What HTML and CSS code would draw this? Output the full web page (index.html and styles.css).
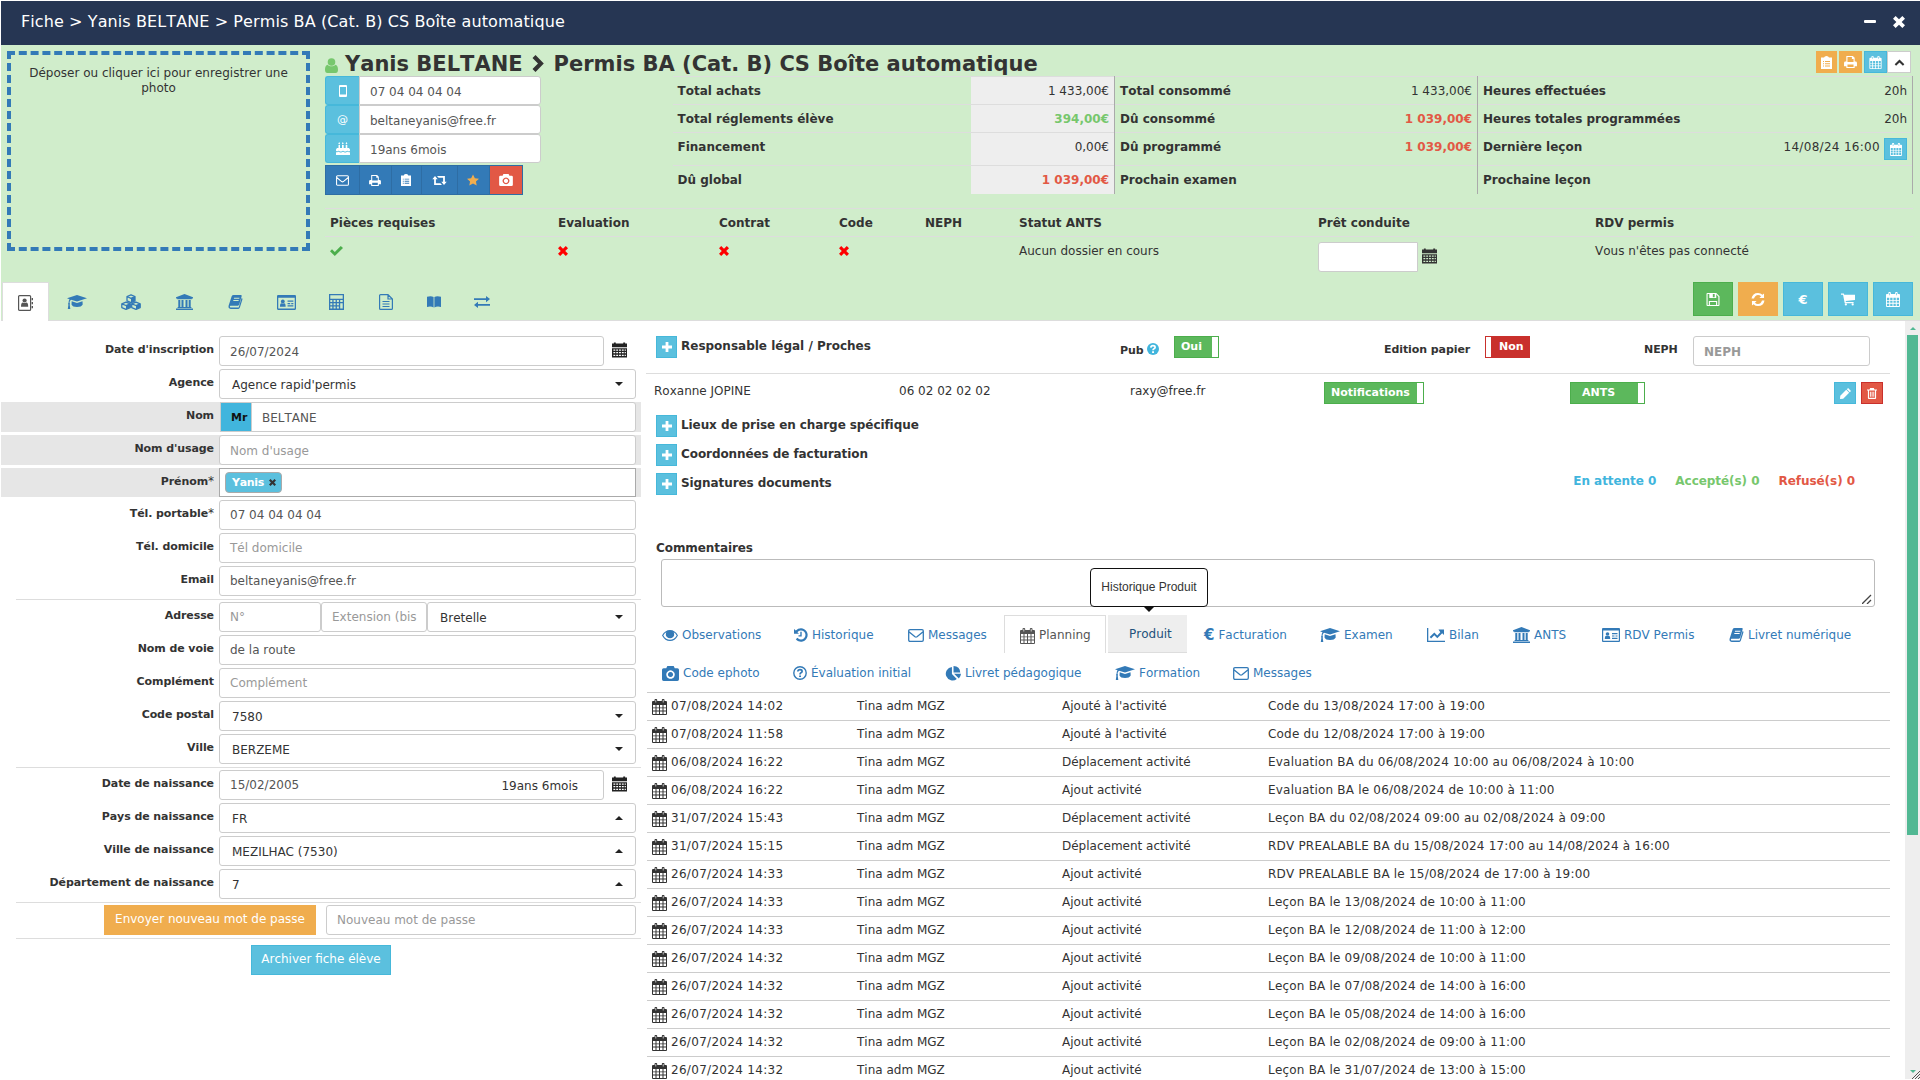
FILE: index.html
```html
<!DOCTYPE html>
<html lang="fr">
<head>
    <meta charset="UTF-8">
    <meta name="viewport" content="width=device-width, initial-scale=1.0">
    <title>Fiche - Yanis BELTANE</title>
    <link rel="stylesheet" href="styles.css">
</head>
<body>
    <!-- icon sprite -->
    <svg class="sprite" width="0" height="0">
        <symbol id="i-user" viewBox="0 0 13 15"><circle cx="6.5" cy="4" r="3.8"/><path d="M2.6 6.8C1 7.2 0 9 0 11.5 0 14 .8 15 2.5 15h8c1.700 0 2.500-1 2.500-3.500 0-2.500-1-4.300-2.600-4.700-2 2-5.800 2-7.800 0z"/></symbol>
        <symbol id="i-chev-right" viewBox="0 0 12 17"><path d="M.5 3L3.500 0l8.300 8.500L3.500 17l-3-3L6 8.500z"/></symbol>
        <symbol id="i-chev-up" viewBox="0 0 12 8"><path d="M6 .6l5.500 5.500-1.600 1.600L6 3.900 2.100 7.700.5 6.100z"/></symbol>
        <symbol id="i-phone" viewBox="0 0 8 12"><path fill-rule="evenodd" d="M1 0h6a1 1 0 0 1 1 1v10a1 1 0 0 1-1 1H1a1 1 0 0 1-1-1V1a1 1 0 0 1 1-1zM1 2v7.500h6V2z"/></symbol>
        <symbol id="i-cake" viewBox="0 0 14 13"><path d="M2.500 3h1.500v3h2V3h1.700v3h2V3h1.600v3h1.700l1 1.500v1.300c-1.200 1.200-2 .2-2.600 0-1 0-1.200.8-2.200.8s-1.200-.8-2.200-.8-1.200.8-2.200.8-1.200-.8-2.200-.8C2 8.800 1.600 10 0 8.800V7.500L1 6h1.500zM0 10.200c1.500.4 1.800-.4 2.600-.4s1.200.8 2.200.8 1.200-.8 2.200-.8 1.200.8 2.200.8 1.200-.8 2.200-.8 1.200.8 2.600.4V13H0zM3.200 0l.9 1.500-.9 1-.9-1zM6.800 0l.9 1.500-.9 1-.9-1zM10.500 0l.9 1.500-.9 1-.9-1z"/></symbol>
        <symbol id="i-mail" viewBox="0 0 16 13"><path fill="none" stroke="currentColor" stroke-width="1.300" d="M2 .7h12q1.300 0 1.300 1.300v9q0 1.300-1.300 1.300H2Q.7 12.300.7 11V2Q.7.700 2 .7zM.9 2.800L7 7.800q1 .7 2 0l6.100-5"/></symbol>
        <symbol id="i-print" viewBox="0 0 14 13"><path fill-rule="evenodd" d="M2.500 0h7L11.500 2v4h1Q14 6 14 7.500V11h-2.500v2h-9v-2H0V7.500Q0 6 1.500 6h1zM3.700 1.200V6.500h6.600V3.200H8.500v-2zM3.700 9.300v2.500h6.600V9.300z"/></symbol>
        <symbol id="i-clip" viewBox="0 0 11 13"><path fill-rule="evenodd" d="M0 1.500h3Q3.500 0 5.500 0t2.500 1.500h3V13H0zM2 5v1h1V5zm2 0v1h5V5zM2 7.300v1h1v-1zm2 0v1h5v-1zM2 9.600v1h1v-1zm2 0v1h5v-1z"/></symbol>
        <symbol id="i-retweet" viewBox="0 0 16 10"><path d="M3 0l3 3.500H4V8h5l1.800 2H2V3.500H0zM13 10l3-3.500h-2V0H5.200L7 2h5v4.500h-2z"/></symbol>
        <symbol id="i-star" viewBox="0 0 13 12"><path d="M6.500 0l2 4L13 4.600 9.700 7.700l.8 4.300-4-2.100-4 2.100.8-4.300L0 4.600 4.500 4z"/></symbol>
        <symbol id="i-camera" viewBox="0 0 16 14"><path fill-rule="evenodd" d="M1.500 2H4l1-2h6l1 2h2.500Q16 2 16 3.500v9q0 1.500-1.500 1.500h-13Q0 14 0 12.500v-9Q0 2 1.500 2zM8 4a4 4 0 1 0 .01 0zM8 5.600a2.400 2.400 0 1 1-.01 0z"/></symbol>
        <symbol id="i-check" viewBox="0 0 13 10"><path d="M0 5.200L2 3.200l2.800 2.700L10.800 0 13 2 4.800 10z"/></symbol>
        <symbol id="i-times" viewBox="0 0 10 10"><path d="M2.200 0L5 2.800 7.800 0 10 2.200 7.200 5 10 7.800 7.800 10 5 7.200 2.200 10 0 7.800 2.800 5 0 2.200z"/></symbol>
        <symbol id="i-calendar" viewBox="0 0 15 16"><path fill-rule="evenodd" d="M0 3q0-1 1-1h1.500V1q0-1 1-1h.7q1 0 1 1v1h4.600V1q0-1 1-1h.7q1 0 1 1v1H14q1 0 1 1v12q0 1-1 1H1q-1 0-1-1zM1 6v2.500h2.500V6zm3.500 0v2.500h2.500V6zM8 6v2.500h2.500V6zm3.500 0v2.500H14V6zM1 9.300v2.300h2.500V9.300zm3.500 0v2.300h2.500V9.300zM8 9.300v2.300h2.500V9.300zm3.500 0v2.300H14V9.300zM1 12.500V15h2.500v-2.500zm3.500 0V15h2.500v-2.500zM8 12.500V15h2.500v-2.500zm3.500 0V15H14v-2.500zM3.500 1v2.500h.7V1zm7.300 0v2.500h.7V1z"/></symbol>
        <symbol id="i-datepick" viewBox="0 0 16 16"><path fill-rule="evenodd" d="M0 1h2V0h2v1h8V0h2v1h2v4H0zM0 6h16v10H0zM1.500 7.500v1.300h2V7.500zm3 0v1.300h2V7.500zm3 0v1.300h2V7.500zm3 0v1.300h2V7.500zm3 0v1.300h1.300V7.500zM1.500 10.200v1.300h2v-1.300zm3 0v1.300h2v-1.300zm3 0v1.300h2v-1.300zm3 0v1.300h2v-1.300zm3 0v1.300h1.300v-1.300zM1.500 13v1.500h2V13zm3 0v1.500h2V13zm3 0v1.500h2V13zm3 0v1.500h2V13zm3 0v1.500h1.300V13z"/></symbol>
        <symbol id="i-contact" viewBox="0 0 15 16"><path fill="none" stroke="currentColor" stroke-width="1.200" d="M1.600.6h10q1 0 1 1v12.800q0 1-1 1h-10q-1 0-1-1V1.600q0-1 1-1z"/><circle cx="6.600" cy="5.500" r="2.100"/><path d="M3 11.800q0-4.200 2-4.200 1.600 1 3.200 0 2 0 2 4.200zM13.600 3H15v2.300h-1.400zm0 4H15v2.300h-1.400zm0 4H15v2.300h-1.400z"/></symbol>
        <symbol id="i-grad" viewBox="0 0 20 15"><path d="M10 0l10 3.300L10 6.600 4 4.700Q2.600 5.500 2.500 8q1 .8.200 1.700L3.300 14H.8l.6-4.300Q.6 8.800 1.500 8 1.600 5.500 2.500 4.200L0 3.300zM4.700 6.300L10 8l5.500-1.700.2 3.200Q14.500 12 10 12t-5.500-2.500z"/></symbol>
        <symbol id="i-cubes" viewBox="0 0 20 16"><path fill="none" stroke="currentColor" stroke-width="1.300" stroke-linejoin="round" d="M10 .8l4 1.700v4.300l-4 1.800-4-1.800V2.500zM6 2.500l4 1.800 4-1.800M5 8.200l4.300 1.600v3.800L5 15.300.8 13.600V9.800zM.8 9.800L5 11.500l4.300-1.700M15 8.200l4.200 1.600v3.800L15 15.300l-4.300-1.700V9.800zM10.700 9.800L15 11.500l4.200-1.700"/><path d="M10 4.300l4-1.800v4.300l-4 1.800zM5 11.500l4.300-1.700v3.800L5 15.300zM15 11.500l4.200-1.700v3.800L15 15.300z"/></symbol>
        <symbol id="i-bank" viewBox="0 0 17 16"><path d="M8.500 0L17 3.300v1.200h-1.200v.8H1.200v-.8H0V3.300zM2.300 6h2v7h1.200V6h2v7h2V6h2v7h1.200V6h2v7h.7v1H1.600v-1h.7zM0 14.600h17V16H0z"/></symbol>
        <symbol id="i-book" viewBox="0 0 15 15"><path fill-rule="evenodd" d="M5.500 0h7.700q1.300 0 .9 1.300l-2.600 9Q11.200 11.500 10 11.500H2.300q-1 .2-.8 1 .2.900 1.300.9h8.100L14 3.200q1.300.3.900 1.600l-2.700 8.700Q11.700 15 10.500 15H2.300Q-.5 14.500.1 11.600L3.400 1.300Q4 0 5.500 0zM6 3l-.3 1h5.800l.3-1zm-.7 2.400L5 6.400h5.700l.3-1z"/></symbol>
        <symbol id="i-card" viewBox="0 0 18 14"><path fill-rule="evenodd" d="M1 0h16q1 0 1 1v12q0 1-1 1H1q-1 0-1-1V1q0-1 1-1zM1.200 2.500v10.300h15.600V2.500z"/><circle cx="5.500" cy="6" r="1.800"/><path d="M2.800 11q0-3.300 1.500-3.300 1.200.7 2.400 0Q8.200 7.700 8.200 11zM10 5h5.500v1.200H10zm0 2.400h2.500v1.200H10zm3.500 0h2v1.200h-2zM10 9.700h5.500v1.200H10z"/></symbol>
        <symbol id="i-calc" viewBox="0 0 15 16"><path fill-rule="evenodd" d="M0 0h15v16H0zM1.300 1.300v3.500h12.400V1.300zM1.300 6v2h2V6zm3.300 0v2h2V6zm3.300 0v2h2V6zm3.300 0v2h2.500V6zM1.300 9.200v2h2v-2zm3.300 0v2h2v-2zm3.300 0v2h2v-2zM11.200 9.200v5.300h2.500V9.200zM1.300 12.500v2h2v-2zm3.300 0v2h2v-2zm3.300 0v2h2v-2z"/></symbol>
        <symbol id="i-file" viewBox="0 0 14 16"><path fill="none" stroke="currentColor" stroke-width="1.200" d="M9 .6H1.600q-1 0-1 1v12.800q0 1 1 1h10.800q1 0 1-1V5zM9 .6V5h4.400M3.500 7.500h7M3.500 10h7M3.500 12.500h7"/></symbol>
        <symbol id="i-open" viewBox="0 0 14 12"><path d="M0 .8Q4-.6 6.600 1v10.500Q4 10 0 11zM14 .8Q10-.6 7.400 1v10.500Q10 10 14 11z"/></symbol>
        <symbol id="i-swap" viewBox="0 0 16 12"><path d="M0 2.200h12V0l4 3.100-4 3.100V4H0zM16 8H4V5.800L0 8.900 4 12V9.800h12z"/></symbol>
        <symbol id="i-save" viewBox="0 0 14 14"><path fill-rule="evenodd" d="M1 0h9.500L14 3.500V13q0 1-1 1H1q-1 0-1-1V1q0-1 1-1zM1.200 1.200v11.600h1.300V8.500h9v4.300h1.300V4L10.500 1.400V5.500H3V1.200zM6.800 1.200v3.300h2V1.200zM3.700 9.700v3.100h6.600V9.700z"/></symbol>
        <symbol id="i-refresh" viewBox="0 0 14 14"><path d="M0 6Q1 0 7 0q2.800 0 4.800 2L13.500.5V5.500h-5L10.300 3.600Q9 2.200 7 2.200 4 2.200 2.700 6zM14 8q-1 6-7 6-2.800 0-4.800-2L.5 13.500V8.500h5L3.700 10.400Q5 11.800 7 11.800q3 0 4.300-3.800z"/></symbol>
        <symbol id="i-cart" viewBox="0 0 15 13"><path d="M0 0h3l.5 1.500H15V7L5 8.200l.2 1H13.500v1.300H4L2.200 1.300H0z"/><circle cx="5.200" cy="11.800" r="1.200"/><circle cx="12.500" cy="11.800" r="1.200"/></symbol>
        <symbol id="i-plus" viewBox="0 0 10 10"><path d="M3.600 0h2.800v3.600H10v2.800H6.400V10H3.600V6.400H0V3.600h3.600z"/></symbol>
        <symbol id="i-pencil" viewBox="0 0 12 12"><path d="M8.800 0L12 3.200 10.700 4.500 7.500 1.300zM6.800 2L10 5.200 3.500 11.700 0 12l.3-3.500z"/></symbol>
        <symbol id="i-trash" viewBox="0 0 11 12"><path fill-rule="evenodd" d="M3.500 0h4l.7 1.500H11v1.200h-1V11q0 1-1 1H2q-1 0-1-1V2.700H0V1.500h2.800zM2.200 2.700v8h6.600v-8zM3.200 4h1v5.500h-1zm1.900 0h1v5.500h-1zM7 4h1v5.500H7z"/></symbol>
        <symbol id="i-eye" viewBox="0 0 16 11"><path fill-rule="evenodd" d="M8 0q5 0 8 5.500Q13 11 8 11T0 5.500Q3 0 8 0zM4.300 2.200Q2.500 3.300 1.300 5.500 4 9.800 8 9.800t6.700-4.300q-1.200-2.200-3-3.300 1.300 3.300-.8 5.100-2.900 2-5.700 0Q3 5.500 4.300 2.200z"/><path d="M8 1.500a3.200 3.200 0 1 0 .01 0z"/></symbol>
        <symbol id="i-history" viewBox="0 0 14 14"><path d="M0 1l1.800 1.600Q4 .3 7 .3a6.700 6.700 0 1 1-5.200 11l1.700-1.500A4.500 4.500 0 1 0 3.400 4.200L5 5.800H0zM6.300 3.800h1.400v4.700H4.500V7.200h1.800z"/></symbol>
        <symbol id="i-chart" viewBox="0 0 18 14"><path d="M0 0h1.300v12.700H18V14H0zM11.500 1.500H17V7l-1.800-1.700-4.900 5-3-3-3.200 3.200-1.400-1.400 4.600-4.600 3 3 3-3.200z"/></symbol>
        <symbol id="i-question" viewBox="0 0 14 14"><circle cx="7" cy="7" r="6.200" fill="none" stroke="currentColor" stroke-width="1.400"/><path fill="none" stroke="currentColor" stroke-width="1.700" d="M4.800 5.500Q5 3.700 7 3.700t2.100 1.600Q9 6.300 8 6.800t-1 1.700"/><path d="M6.100 9.400H8v1.700H6.100z"/></symbol>
        <symbol id="i-help" viewBox="0 0 12 12"><circle cx="6" cy="6" r="6"/><path fill="none" stroke="#fff" stroke-width="1.700" d="M3.800 4.700Q4 2.700 6 2.700t2.100 1.600Q8 5.400 7 5.800T6 7.300"/><path fill="#fff" d="M5.100 8.200H7v1.700H5.100z"/></symbol>
        <symbol id="i-pie" viewBox="0 0 15 14"><path d="M6.500 1v6.500l4.600 4.600A6.300 6.300 0 1 1 6.500 1zM8 0q6 .3 6.300 6H8zM8.500 7.300H15q-.2 2.700-2 4.300z"/></symbol>
    </svg>

    <div class="window">
        <div class="titlebar">
            <span class="title">Fiche &gt; Yanis BELTANE &gt; Permis BA (Cat. B) CS Boîte automatique</span>
            <div class="window-controls">
                <span class="minimize"></span>
                <svg width="12" height="12"><use href="#i-times"/></svg>
            </div>
        </div>

        <div class="student">
            <div class="student-top">
                <div class="photo-drop">Déposer ou cliquer ici pour enregistrer une photo</div>
                <div class="student-main">
                    <div class="student-heading">
                        <svg class="user-icon" width="13" height="15"><use href="#i-user"/></svg>
                        <h1>Yanis BELTANE</h1>
                        <svg class="sep" width="12" height="17"><use href="#i-chev-right"/></svg>
                        <h1>Permis BA (Cat. B) CS Boîte automatique</h1>
                        <div class="mini-buttons">
                            <button class="mini orange small"><svg width="11" height="13"><use href="#i-clip"/></svg></button>
                            <button class="mini orange"><svg width="13" height="12"><use href="#i-print"/></svg></button>
                            <button class="mini info"><svg width="13" height="13"><use href="#i-calendar"/></svg></button>
                            <button class="mini plain"><svg width="11" height="7"><use href="#i-chev-up"/></svg></button>
                        </div>
                    </div>

                    <div class="student-info">
                        <div class="contact">
                            <div class="contact-row"><span class="addon"><svg width="8" height="12"><use href="#i-phone"/></svg></span><span class="value">07 04 04 04 04</span></div>
                            <div class="contact-row"><span class="addon">@</span><span class="value">beltaneyanis@free.fr</span></div>
                            <div class="contact-row"><span class="addon"><svg width="14" height="13"><use href="#i-cake"/></svg></span><span class="value">19ans 6mois</span></div>
                            <div class="button-group">
                                <button><svg width="13" height="11"><use href="#i-mail"/></svg></button>
                                <button><svg width="12" height="11"><use href="#i-print"/></svg></button>
                                <button><svg width="10" height="12"><use href="#i-clip"/></svg></button>
                                <button><svg width="15" height="9"><use href="#i-retweet"/></svg></button>
                                <button class="star"><svg width="12" height="12"><use href="#i-star"/></svg></button>
                                <button class="danger"><svg width="14" height="12"><use href="#i-camera"/></svg></button>
                            </div>
                        </div>
                        <table class="totals">
                            <colgroup><col class="t1"><col class="t2"><col class="t3"><col class="t4"><col class="t5"><col class="t6"></colgroup>
                            <tr>
                                <th>Total achats</th><td class="grey">1 433,00€</td>
                                <th>Total consommé</th><td>1 433,00€</td>
                                <th>Heures effectuées</th><td>20h</td>
                            </tr>
                            <tr>
                                <th>Total réglements élève</th><td class="grey green">394,00€</td>
                                <th>Dû consommé</th><td class="red">1 039,00€</td>
                                <th>Heures totales programmées</th><td>20h</td>
                            </tr>
                            <tr class="tall">
                                <th>Financement</th><td class="grey">0,00€</td>
                                <th>Dû programmé</th><td class="red">1 039,00€</td>
                                <th>Dernière leçon</th>
                                <td><div class="lesson">14/08/24 16:00 <button class="mini info"><svg width="12" height="13"><use href="#i-calendar"/></svg></button></div></td>
                            </tr>
                            <tr>
                                <th>Dû global</th><td class="grey red">1 039,00€</td>
                                <th>Prochain examen</th><td></td>
                                <th>Prochaine leçon</th><td></td>
                            </tr>
                        </table>
                    </div>

                    <table class="status">
                        <colgroup><col class="s1"><col class="s2"><col class="s3"><col class="s4"><col class="s5"><col class="s6"><col class="s7"><col></colgroup>
                        <tr>
                            <th>Pièces requises</th><th>Evaluation</th><th>Contrat</th><th>Code</th><th>NEPH</th><th>Statut ANTS</th><th>Prêt conduite</th><th>RDV permis</th>
                        </tr>
                        <tr>
                            <td><svg class="ok" width="13" height="10"><use href="#i-check"/></svg></td>
                            <td><svg class="ko" width="10" height="10"><use href="#i-times"/></svg></td>
                            <td><svg class="ko" width="10" height="10"><use href="#i-times"/></svg></td>
                            <td><svg class="ko" width="10" height="10"><use href="#i-times"/></svg></td>
                            <td></td>
                            <td>Aucun dossier en cours</td>
                            <td><div class="ready"><span class="ready-input"></span><svg width="15" height="16"><use href="#i-datepick"/></svg></div></td>
                            <td>Vous n'êtes pas connecté</td>
                        </tr>
                    </table>
                </div>
            </div>

            <div class="student-bottom">
                <div class="main-tabs">
                    <a class="active"><svg width="15" height="16"><use href="#i-contact"/></svg></a>
                    <a><svg width="20" height="15"><use href="#i-grad"/></svg></a>
                    <a><svg width="20" height="16"><use href="#i-cubes"/></svg></a>
                    <a><svg width="17" height="16"><use href="#i-bank"/></svg></a>
                    <a><svg width="15" height="14"><use href="#i-book"/></svg></a>
                    <a><svg width="19" height="15"><use href="#i-card"/></svg></a>
                    <a><svg width="15" height="16"><use href="#i-calc"/></svg></a>
                    <a><svg width="14" height="16"><use href="#i-file"/></svg></a>
                    <a><svg width="14" height="12"><use href="#i-open"/></svg></a>
                    <a><svg width="16" height="12"><use href="#i-swap"/></svg></a>
                </div>
                <div class="actions">
                    <button class="success"><svg width="14" height="13"><use href="#i-save"/></svg></button>
                    <button class="orange"><svg width="14" height="13"><use href="#i-refresh"/></svg></button>
                    <button class="info">€</button>
                    <button class="info"><svg width="14" height="13"><use href="#i-cart"/></svg></button>
                    <button class="info"><svg width="14" height="15"><use href="#i-calendar"/></svg></button>
                </div>
            </div>
        </div>

        <div class="content">
            <div class="identity">
                <div class="field low"><label>Date d'inscription</label><span class="input date">26/07/2024</span><svg class="picker" width="15" height="16"><use href="#i-datepick"/></svg></div>
                <div class="field"><label>Agence</label><span class="input select">Agence rapid'permis</span></div>
                <div class="field shaded low"><label>Nom</label><span class="civility">Mr</span><span class="input named">BELTANE</span></div>
                <div class="field shaded low"><label>Nom d'usage</label><span class="input placeholder">Nom d'usage</span></div>
                <div class="field shaded short"><label>Prénom<i>*</i></label><span class="input tags"><span class="tag">Yanis <svg width="7" height="7"><use href="#i-times"/></svg></span></span></div>
                <div class="field"><label>Tél. portable<i>*</i></label><span class="input">07 04 04 04 04</span></div>
                <div class="field"><label>Tél. domicile</label><span class="input placeholder">Tél domicile</span></div>
                <div class="field"><label>Email</label><span class="input">beltaneyanis@free.fr</span></div>
                <hr>
                <div class="field"><label>Adresse</label><span class="input placeholder num">N°</span><span class="input placeholder ext">Extension (bis</span><span class="input select">Bretelle</span></div>
                <div class="field"><label>Nom de voie</label><span class="input">de la route</span></div>
                <div class="field"><label>Complément</label><span class="input placeholder">Complément</span></div>
                <div class="field"><label>Code postal</label><span class="input select">7580</span></div>
                <div class="field"><label>Ville</label><span class="input select">BERZEME</span></div>
                <hr>
                <div class="field"><label>Date de naissance</label><span class="input date">15/02/2005<span class="age">19ans 6mois</span></span><svg class="picker" width="15" height="16"><use href="#i-datepick"/></svg></div>
                <div class="field"><label>Pays de naissance</label><span class="input select up">FR</span></div>
                <div class="field"><label>Ville de naissance</label><span class="input select up">MEZILHAC (7530)</span></div>
                <div class="field"><label>Département de naissance</label><span class="input select up">7</span></div>
                <hr>
                <div class="field password"><button class="orange">Envoyer nouveau mot de passe</button><span class="input placeholder">Nouveau mot de passe</span></div>
                <hr>
                <button class="archive info">Archiver fiche élève</button>
            </div>

            <div class="details">
                <div class="legal">
                    <button class="plus info"><svg width="10" height="10"><use href="#i-plus"/></svg></button>
                    <h4>Responsable légal / Proches</h4>
                    <label class="pub">Pub <svg width="12" height="12"><use href="#i-help"/></svg></label>
                    <span class="toggle on pub-toggle">Oui</span>
                    <label class="paper">Edition papier</label>
                    <span class="toggle off">Non</span>
                    <label class="neph">NEPH</label>
                    <span class="input placeholder neph-input">NEPH</span>
                </div>
                <div class="relative">
                    <span class="r-name">Roxanne JOPINE</span>
                    <span class="r-phone">06 02 02 02 02</span>
                    <span class="r-mail">raxy@free.fr</span>
                    <span class="r-notif"><span class="toggle on notif-toggle">Notifications</span></span>
                    <span class="r-ants"><span class="toggle on ants-toggle">ANTS</span></span>
                    <button class="mini info edit"><svg width="11" height="11"><use href="#i-pencil"/></svg></button>
                    <button class="mini danger trash"><svg width="10" height="11"><use href="#i-trash"/></svg></button>
                </div>
                <div class="section"><button class="plus info"><svg width="10" height="10"><use href="#i-plus"/></svg></button><h4>Lieux de prise en charge spécifique</h4></div>
                <div class="section"><button class="plus info"><svg width="10" height="10"><use href="#i-plus"/></svg></button><h4>Coordonnées de facturation</h4></div>
                <div class="section">
                    <button class="plus info"><svg width="10" height="10"><use href="#i-plus"/></svg></button><h4>Signatures documents</h4>
                    <div class="counters"><b class="waiting">En attente 0</b><b class="green">Accepté(s) 0</b><b class="red">Refusé(s) 0</b></div>
                </div>

                <h4 class="comments-title">Commentaires</h4>
                <div class="comments"><svg width="10" height="10"><path fill="none" stroke="#444" stroke-width="1.300" d="M0 10L9 1M5 10l4-4"/></svg></div>

                <div class="history-tabs first">
                    <a><svg width="16" height="11"><use href="#i-eye"/></svg>Observations</a>
                    <a><svg width="14" height="14"><use href="#i-history"/></svg>Historique</a>
                    <a><svg width="16" height="13"><use href="#i-mail"/></svg>Messages</a>
                    <a class="active"><svg width="15" height="16"><use href="#i-calendar"/></svg>Planning</a>
                    <a class="hover">Produit<span class="tooltip">Historique Produit</span></a>
                    <a><b class="euro">€</b>Facturation</a>
                    <a><svg width="20" height="15"><use href="#i-grad"/></svg>Examen</a>
                    <a><svg width="18" height="14"><use href="#i-chart"/></svg>Bilan</a>
                    <a><svg width="17" height="16"><use href="#i-bank"/></svg>ANTS</a>
                    <a><svg width="18" height="14"><use href="#i-card"/></svg>RDV Permis</a>
                    <a><svg width="15" height="14"><use href="#i-book"/></svg>Livret numérique</a>
                </div>
                <div class="history-tabs second">
                    <a><svg width="17" height="15"><use href="#i-camera"/></svg>Code ephoto</a>
                    <a><svg width="14" height="14"><use href="#i-question"/></svg>Évaluation initial</a>
                    <a><svg width="16" height="15"><use href="#i-pie"/></svg>Livret pédagogique</a>
                    <a><svg width="20" height="15"><use href="#i-grad"/></svg>Formation</a>
                    <a><svg width="16" height="13"><use href="#i-mail"/></svg>Messages</a>
                </div>

                <table class="history">
                    <colgroup><col class="h1"><col class="h2"><col class="h3"><col></colgroup>
                    <tbody id="historyRows"></tbody>
                </table>
            </div>

            <div class="scrollbar">
                <span class="arrow-up"></span>
                <span class="thumb"></span>
                <span class="arrow-down"></span>
                <svg class="grip" width="8" height="8"><path stroke="#555" stroke-width="1" d="M0 8L8 0M3 8l5-5M6 8l2-2"/></svg>
            </div>
        </div>
    </div>

    <script>
        const rows = [
            ['07/08/2024 14:02', "Ajouté à l'activité", 'Code du 13/08/2024 17:00 à 19:00'],
            ['07/08/2024 11:58', "Ajouté à l'activité", 'Code du 12/08/2024 17:00 à 19:00'],
            ['06/08/2024 16:22', 'Déplacement activité', 'Evaluation BA du 06/08/2024 10:00 au 06/08/2024 à 10:00'],
            ['06/08/2024 16:22', 'Ajout activité', 'Evaluation BA le 06/08/2024 de 10:00 à 11:00'],
            ['31/07/2024 15:43', 'Déplacement activité', 'Leçon BA du 02/08/2024 09:00 au 02/08/2024 à 09:00'],
            ['31/07/2024 15:15', 'Déplacement activité', 'RDV PREALABLE BA du 15/08/2024 17:00 au 14/08/2024 à 16:00'],
            ['26/07/2024 14:33', 'Ajout activité', 'RDV PREALABLE BA le 15/08/2024 de 17:00 à 19:00'],
            ['26/07/2024 14:33', 'Ajout activité', 'Leçon BA le 13/08/2024 de 10:00 à 11:00'],
            ['26/07/2024 14:33', 'Ajout activité', 'Leçon BA le 12/08/2024 de 11:00 à 12:00'],
            ['26/07/2024 14:32', 'Ajout activité', 'Leçon BA le 09/08/2024 de 10:00 à 11:00'],
            ['26/07/2024 14:32', 'Ajout activité', 'Leçon BA le 07/08/2024 de 14:00 à 16:00'],
            ['26/07/2024 14:32', 'Ajout activité', 'Leçon BA le 05/08/2024 de 14:00 à 16:00'],
            ['26/07/2024 14:32', 'Ajout activité', 'Leçon BA le 02/08/2024 de 09:00 à 11:00'],
            ['26/07/2024 14:32', 'Ajout activité', 'Leçon BA le 31/07/2024 de 13:00 à 15:00']
        ];

        document.getElementById('historyRows').innerHTML = rows.map(([date, action, label]) => `
            <tr>
                <td class="when"><svg width="15" height="16"><use href="#i-calendar"/></svg>${date}</td>
                <td>Tina adm MGZ</td>
                <td>${action}</td>
                <td class="what">${label}</td>
            </tr>
        `).join('');
    </script>
</body>
</html>
```

FILE: styles.css
```css
* {
    margin: 0;
    padding: 0;
    box-sizing: border-box;
}

body {
    font-family: Verdana, "DejaVu Sans", sans-serif;
    font-size: 12px;
    font-kerning: none;
    line-height: 15px;
    color: #333;
    background: #fff;
    width: 1920px;
    height: 1080px;
    overflow: hidden;
}

svg {
    fill: currentColor;
    flex: none;
}

.sprite {
    position: absolute;
}

button {
    font: inherit;
    font-kerning: none;
    color: #fff;
    border: 1px solid transparent;
    display: flex;
    align-items: center;
    justify-content: center;
    flex: none;
}

.info {
    background: #5bc0de;
    border-color: #46b8da;
}

.orange {
    background: #f0ad4e;
}

.success {
    background: #5cb85c;
    border-color: #4cae4c;
}

.danger {
    background: #e25845;
    border-color: #d43f3a;
}

.green {
    color: #77c76d;
    font-weight: bold;
}

.red {
    color: #e25845;
    font-weight: bold;
}

.waiting {
    color: #41b5dd;
}

.window {
    margin: 1px 0 0 1px;
    height: 1079px;
}

/* title bar */
.titlebar {
    height: 44px;
    background: #263653;
    color: #fff;
    display: flex;
    align-items: center;
    justify-content: space-between;
    padding: 0 15px 3px 20px;
}

.title {
    font-size: 16px;
    letter-spacing: 0.1px;
}

.window-controls {
    display: flex;
    align-items: center;
    gap: 17px;
}

.minimize {
    width: 12px;
    height: 3px;
    background: #fff;
    border-radius: 1px;
}

/* green banner */
.student {
    height: 276px;
    background: #d0edcb;
    border-bottom: 1px solid #ddd;
}

.student-top {
    display: flex;
    height: 237px;
}

.photo-drop {
    width: 303px;
    height: 200px;
    margin: 6px 15px 0 6px;
    padding: 11px 15px;
    border: 4px dashed #337ab7;
    text-align: center;
    flex: none;
}

.student-main {
    width: 1588px;
}

.student-heading {
    height: 31px;
    display: flex;
    align-items: flex-start;
}

.student-heading h1 {
    font-size: 21px;
    line-height: 24px;
    margin-top: 7px;
    white-space: nowrap;
}

.user-icon {
    color: #77c76d;
    margin: 13px 7px 0 0;
}

.sep {
    margin: 10px 10px 0 9px;
}

.mini-buttons {
    display: flex;
    margin: 6px 2px 0 auto;
}

.mini {
    width: 23px;
    height: 22px;
}

.mini-buttons .orange {
    margin-right: 2px;
}

.mini-buttons .small {
    width: 21px;
}

.mini-buttons .plain {
    width: 24px;
    background: #fff;
    border-color: #ccc;
    color: #333;
}

.student-info {
    display: flex;
    height: 132px;
}

.contact {
    width: 348px;
}

.contact-row {
    display: flex;
    width: 216px;
    height: 29px;
}

.addon {
    width: 34px;
    background: #5bc0de;
    border: 1px solid #46b8da;
    border-right: 0;
    border-radius: 3px 0 0 3px;
    color: #fff;
    font-size: 11px;
    display: flex;
    align-items: center;
    justify-content: center;
}

.value {
    flex: 1;
    background: #fff;
    border: 1px solid #ccc;
    border-radius: 0 3px 3px 0;
    padding: 8px 10px 0;
    color: #555;
}

.button-group {
    display: grid;
    grid-template-columns: 34px 32px 30px 36px 32px 34px;
    width: 198px;
    height: 30px;
    margin-top: 2px;
}

.button-group button {
    background: #337ab7;
    border: 1px solid #2e6da4;
    border-right: 0;
    padding-right: 1px;
}

.button-group .star {
    color: #f0ad4e;
}

.button-group .danger {
    background: #e25845;
    border-right: 1px solid #2e6da4;
}

table {
    border-collapse: collapse;
    table-layout: fixed;
}

th {
    text-align: left;
}

.totals {
    width: 1240px;
    height: 117px;
}

.t1 { width: 298px; }
.t2 { width: 144px; }
.t3 { width: 180px; }
.t4 { width: 183px; }
.t5 { width: 220px; }
.t6 { width: 215px; }

.totals tr {
    height: 28px;
    border-top: 1px solid #ddd;
}

.totals tr.tall {
    height: 33px;
}

.totals th,
.totals td {
    padding: 7px 5px 0;
    vertical-align: top;
}

.totals td {
    text-align: right;
    border-right: 1px solid #aaa;
}

.totals .grey {
    background: #eee;
}

.lesson {
    display: flex;
    justify-content: flex-end;
    gap: 4px;
    height: 21px;
    letter-spacing: 0.3px;
}

.lesson .mini {
    margin: -2px 0 0;
}

.status {
    width: 1588px;
}

.s1 { width: 228px; }
.s2 { width: 161px; }
.s3 { width: 120px; }
.s4 { width: 86px; }
.s5 { width: 94px; }
.s6 { width: 299px; }
.s7 { width: 277px; }

.status tr {
    border-top: 1px solid #ddd;
    height: 28px;
}

.status th,
.status td {
    padding: 7px 5px 0;
    vertical-align: top;
}

.status .ok {
    color: #4cae4c;
}

.status .ko {
    color: #f00;
}

.status svg {
    display: block;
    margin-top: 2px;
}

.ready {
    display: flex;
    gap: 4px;
    margin-top: -2px;
}

.ready-input {
    width: 100px;
    height: 30px;
    background: #fff;
    border: 1px solid #ccc;
    border-radius: 3px 0 0 3px;
}

.ready svg {
    margin-top: 6px;
}

/* main tabs */
.student-bottom {
    display: flex;
    justify-content: space-between;
    height: 39px;
    padding: 0 7px 0 1px;
}

.main-tabs {
    display: grid;
    grid-template-columns: 48px 53px 56px 51px 51px 51px 49px 49px 47px 49px;
    color: #337ab7;
}

.main-tabs a {
    display: flex;
    align-items: center;
    justify-content: center;
    padding-top: 1px;
}

.main-tabs .active {
    width: 47px;
    background: #fff;
    border: 1px solid #ddd;
    border-bottom: 0;
    color: #555;
}

.actions {
    display: flex;
    gap: 5px;
}

.actions button {
    width: 40px;
    height: 34px;
    font-size: 13px;
    font-weight: bold;
}

/* body */
.content {
    display: flex;
    height: 758px;
    overflow: hidden;
}

.identity {
    width: 640px;
    padding-top: 15px;
    flex: none;
}

.field {
    display: flex;
    height: 30px;
    margin-bottom: 3px;
    padding-right: 5px;
}

.field.short {
    height: 29px;
}

.field.shaded {
    background: #e6e6e6;
}

label {
    font-size: 11px;
    font-weight: bold;
    letter-spacing: -0.08px;
}

label i {
    font-size: 12px;
    font-style: normal;
    font-weight: normal;
}

.field label {
    width: 218px;
    padding: 6px 5px 0 0;
    text-align: right;
    flex: none;
}

.input {
    flex: 1;
    height: 100%;
    background: #fff;
    border: 1px solid #ccc;
    border-radius: 3px;
    padding: 7px 10px 0;
    color: #555;
    white-space: nowrap;
    overflow: hidden;
}

.low .input {
    padding-top: 8px;
}

.input.placeholder {
    color: #999;
}

.input.date {
    flex: 0 0 385px;
    display: flex;
    justify-content: space-between;
}

.age {
    margin: 1px 15px 0 0;
    color: #333;
}

.picker {
    margin: 6px 0 0 8px;
    color: #222;
}

.input.select {
    display: flex;
    justify-content: space-between;
    padding: 8px 12px 0;
    color: #333;
}

.input.select::after {
    content: "";
    width: 8px;
    height: 4px;
    margin-top: 4px;
    background: #222;
    clip-path: polygon(0 0, 100% 0, 50% 100%);
}

.input.select.up::after {
    clip-path: polygon(0 100%, 100% 100%, 50% 0);
}

.civility {
    width: 32px;
    margin-left: 1px;
    margin-right: -1px;
    border: 1px solid #ccc;
    border-right: 0;
    background: #41b5dd;
    color: #111;
    font-size: 11px;
    font-weight: bold;
    padding: 7px 0 0 10px;
}

.input.named {
    border-radius: 0 3px 3px 0;
}

.input.tags {
    padding: 3px 5px;
    border-radius: 0;
    border-color: #aaa;
}

.tag {
    display: inline-flex;
    align-items: center;
    gap: 5px;
    height: 21px;
    padding: 0 5px 0 6px;
    background: #5bc0de;
    border: 1px solid #aaa;
    border-radius: 4px;
    color: #fff;
    font-size: 11px;
    font-weight: bold;
    letter-spacing: -0.3px;
}

.tag svg {
    color: #333;
}

.input.num {
    flex: 0 0 102px;
}

.input.ext {
    flex: 0 0 106px;
}

hr {
    border: 0;
    border-top: 1px solid #ddd;
    margin: 0 0 2px 15px;
}

.password .orange {
    width: 212px;
    margin: 0 10px 0 103px;
    padding-bottom: 1px;
}

.archive {
    width: 140px;
    height: 30px;
    margin: 6px 0 0 250px;
    padding-bottom: 1px;
}

/* right column */
.details {
    width: 1244px;
    margin-left: 5px;
    flex: none;
}

h4 {
    font-size: 12px;
    letter-spacing: -0.08px;
    white-space: nowrap;
}

.legal {
    height: 53px;
    padding: 15px 0 0 10px;
    border-bottom: 1px solid #ddd;
    display: flex;
    align-items: flex-start;
}

.plus {
    width: 21px;
    height: 22px;
    margin-right: 4px;
}

.legal h4 {
    width: 439px;
    margin-top: 3px;
    letter-spacing: 0;
}

.pub {
    width: 54px;
    margin-top: 7px;
    display: flex;
    gap: 3px;
}

.pub svg {
    color: #41b5dd;
}

.toggle {
    display: block;
    height: 22px;
    padding: 2px 0 0 6px;
    font-size: 11px;
    font-weight: bold;
    color: #fff;
    border: 1px solid #4cae4c;
    background: linear-gradient(90deg, #5cb85c calc(100% - 6px), #fff 0);
}

.toggle.off {
    width: 45px;
    padding-left: 13px;
    border-color: #c9302c;
    background: linear-gradient(90deg, #fff 5px, #c9302c 0);
}

.pub-toggle {
    width: 45px;
}

.paper {
    width: 101px;
    margin: 6px 0 0 165px;
}

.neph {
    width: 49px;
    margin: 6px 0 0 114px;
}

.neph-input {
    flex: 0 0 177px;
    height: 30px;
    padding-top: 8px;
    font-weight: bold;
}

.relative {
    display: flex;
    align-items: flex-start;
    height: 41px;
    padding: 8px 0 0 8px;
}

.relative .r-name,
.relative .r-phone,
.relative .r-mail {
    padding-top: 2px;
}

.r-name { width: 245px; }
.r-phone { width: 231px; }
.r-mail { width: 194px; }
.r-notif { width: 246px; }
.r-ants { width: 264px; }

.notif-toggle {
    width: 100px;
}

.ants-toggle {
    width: 75px;
    padding-left: 11px;
}

.edit {
    width: 22px;
    margin-right: 5px;
}

.trash {
    width: 22px;
    border-color: #c9302c;
}

.section {
    display: flex;
    height: 29px;
    padding-left: 10px;
}

.section h4 {
    margin-top: 3px;
}

.counters {
    display: flex;
    gap: 19px;
    margin: 1px 35px 0 auto;
    letter-spacing: -0.05px;
}

.comments-title {
    margin: 39px 0 3px 10px;
}

.comments {
    height: 48px;
    margin: 0 15px 0 15px;
    border: 1px solid #bbb;
    border-radius: 3px;
    display: flex;
    align-items: flex-end;
    justify-content: flex-end;
    padding: 2px;
}

.history-tabs {
    display: grid;
    height: 38px;
    color: #337ab7;
}

.history-tabs.first {
    grid-template-columns: 132px 114px 112px 104px 80px 116px 107px 86px 89px 127px 154px;
    margin-top: 8px;
}

.history-tabs.second {
    grid-template-columns: 131px 152px 170px 118px 120px;
    margin-bottom: 1px;
}

.history-tabs a {
    display: flex;
    align-items: center;
    gap: 4px;
    padding: 2px 0 0 16px;
    white-space: nowrap;
}

.history-tabs .active {
    width: 102px;
    padding-left: 15px;
    border: 1px solid #ddd;
    border-bottom: 0;
    color: #555;
}

.history-tabs .hover {
    position: relative;
    width: 79px;
    padding-left: 21px;
    background: #eee;
    border-bottom: 1px solid #ddd;
    color: #23527c;
}

.euro {
    font-size: 15px;
}

.tooltip {
    position: absolute;
    left: -18px;
    top: -47px;
    width: 118px;
    height: 39px;
    line-height: 36px;
    border: 1px solid #111;
    border-radius: 4px;
    background: #fff;
    color: #333;
    font-family: Arial, "Liberation Sans", sans-serif;
    text-align: center;
}

.tooltip::after {
    content: "";
    position: absolute;
    left: 53px;
    top: 38px;
    border: 5px solid transparent;
    border-top-color: #111;
    border-bottom: 0;
}

.history {
    width: 1243px;
    margin-left: 1px;
}

.h1 { width: 205px; }
.h2 { width: 205px; }
.h3 { width: 206px; }

.history tr {
    height: 28px;
    border-top: 1px solid #ccc;
}

.history td {
    padding: 6px 5px 0;
    vertical-align: top;
    white-space: nowrap;
}

.history .when {
    letter-spacing: 0.3px;
}

.history .what {
    letter-spacing: 0.2px;
}

.history svg {
    float: left;
    margin-right: 4px;
}

/* custom scrollbar */
.scrollbar {
    width: 15px;
    margin-left: 15px;
    background: #eee;
    display: flex;
    flex-direction: column;
    align-items: center;
    position: relative;
}

.arrow-up {
    border: 3px solid transparent;
    border-top: 0;
    border-bottom-color: #51b893;
    margin: 6px 0 5px;
}

.thumb {
    width: 11px;
    height: 500px;
    background: #51b893;
}

.arrow-down {
    border: 3px solid transparent;
    border-bottom: 0;
    border-top-color: #51b893;
    margin-top: 235px;
}

.grip {
    position: absolute;
    right: 0;
    bottom: 0;
}
```
